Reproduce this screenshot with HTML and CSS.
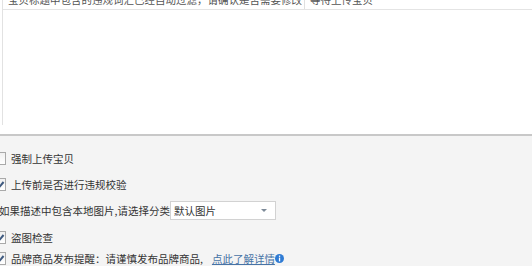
FILE: index.html
```html
<!doctype html>
<html lang="zh-CN">
    <head>
        <meta charset="utf-8">
        <link rel="stylesheet" href="styles.css">
    </head>
    <body>
        <div class="grid-panel">
            <div class="grid-body">
                <div class="grid-row">
                    <span class="cell cell-title">宝贝标题中包含的违规词汇已经自动过滤，请确认是否需要修改</span>
                    <span class="cell cell-state">等待上传宝贝</span>
                </div>
            </div>
        </div>

        <form class="options">
            <label class="option">
                <span class="check"></span>
                <span>强制上传宝贝</span>
            </label>
            <label class="option">
                <span class="check is-checked"></span>
                <span>上传前是否进行违规校验</span>
            </label>
            <div class="option option-select">
                <span>如果描述中包含本地图片,请选择分类</span>
                <div class="select">
                    <span>默认图片</span>
                    <span class="select-arrow"></span>
                </div>
            </div>
            <label class="option">
                <span class="check is-checked"></span>
                <span>盗图检查</span>
            </label>
            <label class="option option-last">
                <span class="check is-checked"></span>
                <span>品牌商品发布提醒：请谨慎发布品牌商品,</span>
                <a class="more-link" href="#">点此了解详情</a>
                <svg class="info" width="9" height="9" viewBox="0 0 9 9">
                    <circle cx="4.5" cy="4.5" r="4.5" fill="#2f7bd4"/>
                    <rect x="3.9" y="1.6" width="1.3" height="1.3" fill="#fff"/>
                    <rect x="3.9" y="3.6" width="1.3" height="3.8" fill="#fff"/>
                </svg>
            </label>
        </form>
    </body>
</html>
```

FILE: styles.css
```css
body {
    margin: 0;
    width: 532px;
    height: 266px;
    overflow: hidden;
    background: #f4f4f4;
    color: #333;
    font-family: "Noto Sans CJK SC", "Liberation Sans", sans-serif;
    font-size: 10.5px;
}

.grid-panel {
    height: 134px;
    background: #fff;
    border-bottom: 2px solid #c8c8c8;
    overflow: hidden;
}
.grid-body {
    height: 100%;
    margin-left: 2px;
    border-left: 1px solid #e2e2e2;
}
.grid-row {
    display: flex;
    height: 18px;
    margin-top: -9px;
    border-bottom: 1px solid #e4e4e4;
    line-height: 18px;
    color: #555;
}
.cell {
    white-space: nowrap;
    overflow: hidden;
    padding: 0 5px;
}
.cell-title {
    flex: none;
    box-sizing: border-box;
    width: 302px;
    border-right: 1px solid #e0e0e0;
}
.cell-state {
    flex: 1;
}

.options {
    display: flex;
    flex-direction: column;
    padding-top: 9px;
}
.option {
    display: flex;
    align-items: center;
    height: 26px;
    white-space: nowrap;
}
.option-select {
    height: 27px;
    margin-left: -1px;
}
.option-last {
    height: 16px;
}

.check {
    box-sizing: border-box;
    width: 13px;
    height: 13px;
    margin-left: -7px;
    margin-right: 5px;
    border: 1px solid #a9a9a9;
    background: linear-gradient(#f0f0f0, #fff);
    position: relative;
}
.check.is-checked::after {
    content: "";
    position: absolute;
    left: 3px;
    top: 1px;
    width: 3px;
    height: 7px;
    border: solid #3d587e;
    border-width: 0 2px 2px 0;
    transform: rotate(40deg);
}

.select {
    box-sizing: border-box;
    display: flex;
    align-items: center;
    justify-content: space-between;
    width: 106px;
    height: 19px;
    padding: 0 8px 0 3px;
    background: #fff;
    border: 1px solid #d2d2d2;
}
.select-arrow {
    width: 0;
    height: 0;
    border-left: 3px solid transparent;
    border-right: 3px solid transparent;
    border-top: 3px solid #7d8a98;
}

.more-link {
    margin-left: 9px;
    color: #4773a6;
    text-decoration: underline;
}
.info {
    margin-left: 0;
}
```
